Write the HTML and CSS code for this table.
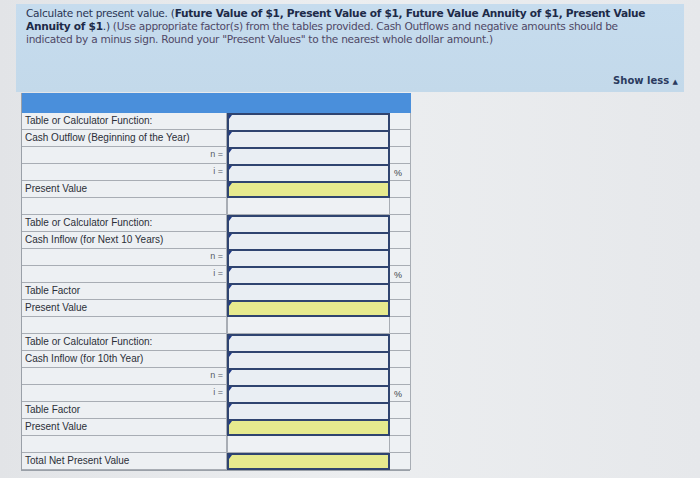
FILE: index.html
```html
<!DOCTYPE html>
<html>
<head>
<meta charset="utf-8">
<link rel="stylesheet" href="styles.css">
</head>
<body>
<div class="page">
  <div class="info">
    <p class="q">Calculate net present value. (<b>Future Value of $1, Present Value of $1, Future Value Annuity of $1, Present Value</b><br><b>Annuity of $1</b>.) <span class="ins">(Use appropriate factor(s) from the tables provided. Cash Outflows and negative amounts should be<br>indicated by a minus sign. Round your "Present Values" to the nearest whole dollar amount.)</span></p>
    <div class="toggle">Show less <span class="tri">&#9650;</span></div>
  </div>
  <div class="grid">
    <div class="hd"></div>

    <div class="lab">Table or Calculator Function:</div><div class="inp"></div><div class="pc"></div>
    <div class="lab">Cash Outflow (Beginning of the Year)</div><div class="inp"></div><div class="pc"></div>
    <div class="lab r">n =</div><div class="inp"></div><div class="pc"></div>
    <div class="lab r">i =</div><div class="inp"></div><div class="pc">%</div>
    <div class="lab">Present Value</div><div class="inp y"></div><div class="pc"></div>
    <div class="lab"></div><div class="emp"></div><div class="pc"></div>

    <div class="lab">Table or Calculator Function:</div><div class="inp"></div><div class="pc"></div>
    <div class="lab">Cash Inflow (for Next 10 Years)</div><div class="inp"></div><div class="pc"></div>
    <div class="lab r">n =</div><div class="inp"></div><div class="pc"></div>
    <div class="lab r">i =</div><div class="inp"></div><div class="pc">%</div>
    <div class="lab">Table Factor</div><div class="inp"></div><div class="pc"></div>
    <div class="lab">Present Value</div><div class="inp y"></div><div class="pc"></div>
    <div class="lab"></div><div class="emp"></div><div class="pc"></div>

    <div class="lab">Table or Calculator Function:</div><div class="inp"></div><div class="pc"></div>
    <div class="lab">Cash Inflow (for 10th Year)</div><div class="inp"></div><div class="pc"></div>
    <div class="lab r">n =</div><div class="inp"></div><div class="pc"></div>
    <div class="lab r">i =</div><div class="inp"></div><div class="pc">%</div>
    <div class="lab">Table Factor</div><div class="inp"></div><div class="pc"></div>
    <div class="lab">Present Value</div><div class="inp y"></div><div class="pc"></div>
    <div class="lab"></div><div class="emp"></div><div class="pc"></div>

    <div class="lab">Total Net Present Value</div><div class="inp y"></div><div class="pc"></div>
  </div>
</div>
</body>
</html>
```

FILE: styles.css
```css
* { box-sizing: border-box; }
html, body { margin: 0; padding: 0; }
body {
  width: 700px;
  height: 478px;
  overflow: hidden;
  background: linear-gradient(90deg, #e2e4e7 0%, #eceef0 50%, #e6e8eb 100%);
  font-family: "DejaVu Sans", "Open Sans", sans-serif;
}
.page {
  padding: 4px 12px 0 16px;
}
.info {
  background: linear-gradient(180deg, #c6dcee 0%, #c3d9ea 100%);
  height: 88px;
  padding: 3px 8px 0 10px;
  position: relative;
  color: #2a3553;
  width: 668px;
}
.q {
  margin: 0;
  font-size: 10.6px;
  line-height: 13px;
  white-space: nowrap;
  letter-spacing: -0.28px;
}
.q b { font-weight: 700; color: #1d2a48; }
.ins { color: #4f4866; }
.toggle {
  position: absolute;
  right: 6px;
  bottom: 6px;
  font-size: 10px;
  font-weight: 700;
  color: #2a3a5e;
}
.tri { font-size: 7px; }
.grid {
  margin: 1px 0 0 5px;
  width: 389px;
  display: grid;
  grid-template-columns: 205px 163px 21px;
  grid-template-rows: 20px;
  grid-auto-rows: 17px;
  background: #eef1f4;
  border-left: 1px solid #9aa0a8;
  border-bottom: 1px solid #9aa0a8;
}
.hd {
  grid-column: 1 / 4;
  grid-row: 1;
  background: #4a8fdb;
}
.lab {
  font-family: "Liberation Sans", Arial, sans-serif;
  font-size: 10px;
  color: #2b2f38;
  padding: 2px 0 0 3px;
  border-bottom: 1px solid #a8adb4;
  border-right: 1px solid #a8adb4;
  background: #edf0f3;
  white-space: nowrap;
}
.lab.r { text-align: right; padding-right: 3px; font-size: 9px; color: #555b66; }
.inp {
  background: #e9eef3;
  border-top: 2px solid #2f4470;
  border-left: 2px solid #2f4470;
  border-right: 2px solid #2f4470;
  position: relative;
}
.inp::before {
  content: "";
  position: absolute;
  left: 0;
  top: 0;
  border-top: 4px solid #1f3a8a;
  border-right: 3px solid transparent;
}
.inp.y {
  background: #e6ea8e;
  border-bottom: 2px solid #2f4470;
}
.emp {
  border-left: 1px solid #a8adb4;
  border-right: 1px solid #a8adb4;
  border-bottom: 1px solid #a8adb4;
  background: #eef1f4;
}
.pc {
  font-family: "Liberation Sans", Arial, sans-serif;
  font-size: 9px;
  color: #3a3f48;
  border-bottom: 1px solid #a8adb4;
  border-right: 1px solid #a8adb4;
  padding: 4px 0 0 4px;
  background: #eef1f4;
}
```
